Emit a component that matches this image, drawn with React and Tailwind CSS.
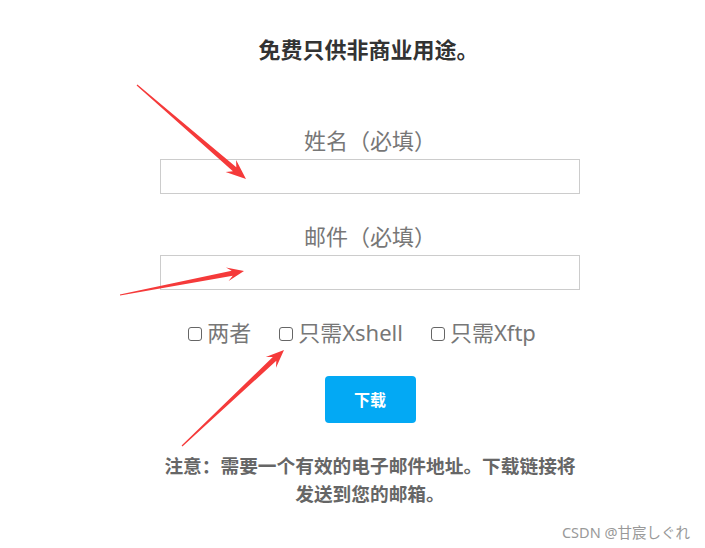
import React from "react";

const FONT = { fontFamily: '"Noto Sans", "Noto Sans CJK SC", sans-serif' };

// tapered red annotation arrow, tail -> tip
function arrowPoints([tx, ty], [px, py], back = 20, half = 8) {
  const len = Math.hypot(px - tx, py - ty);
  const ux = (px - tx) / len, uy = (py - ty) / len;
  const nx = -uy, ny = ux;
  const bx = px - back * ux, by = py - back * uy;
  const kx = px - (back - 5) * ux, ky = py - (back - 5) * uy;
  const pts = [
    [tx + 0.6 * nx, ty + 0.6 * ny],
    [kx + 2.6 * nx, ky + 2.6 * ny],
    [bx + half * nx, by + half * ny],
    [px, py],
    [bx - half * nx, by - half * ny],
    [kx - 2.6 * nx, ky - 2.6 * ny],
    [tx - 0.6 * nx, ty - 0.6 * ny],
  ];
  return pts.map(p => p.map(v => v.toFixed(1)).join(",")).join(" ");
}

const ARROWS = [
  { tail: [137, 85], tip: [246, 179], back: 20, half: 8 },
  { tail: [120, 295], tip: [244, 271], back: 17, half: 7 },
  { tail: [182, 446], tip: [284, 350], back: 18, half: 7.5 },
];

function Check({ label }) {
  return (
    <label className="flex items-center gap-[5px]">
      <span className="mt-[4px] w-[14px] h-[14px] border border-[#666] rounded-[3px] bg-white" />
      <span>{label}</span>
    </label>
  );
}

export default function App() {
  return (
    <div className="relative w-[705px] h-[548px] bg-white overflow-hidden" style={FONT}>
      <div className="ml-[160px] w-[420px] pt-[36px] flex flex-col">
        <h1 className="pr-[3px] text-center text-[22px] leading-[26px] font-bold text-[#333]">免费只供非商业用途。</h1>

        <div className="mt-[65px] text-center text-[22px] leading-[26px] text-[#777]">姓名（必填）</div>
        <input className="mt-[6px] h-[35px] w-full border border-[#ccc] bg-white outline-none px-2" />

        <div className="mt-[29px] text-center text-[22px] leading-[26px] text-[#777]">邮件（必填）</div>
        <input className="mt-[6px] h-[35px] w-full border border-[#ccc] bg-white outline-none px-2" />

        <div className="mt-[29px] pr-[16px] flex justify-center gap-[28px] text-[22px] leading-[26px] text-[#777]">
          <Check label="两者" />
          <Check label="只需Xshell" />
          <Check label="只需Xftp" />
        </div>

        <div className="mt-[31px] flex justify-center">
          <button className="w-[91px] h-[47px] rounded-[4px] bg-[#03a9f4] text-white text-[16px] font-bold">下载</button>
        </div>

        <p className="mt-[29px] text-center text-[18.7px] leading-[28px] font-bold text-[#666]">
          注意：需要一个有效的电子邮件地址。下载链接将发送到您的邮箱。
        </p>
      </div>

      <div className="absolute right-[15px] top-[522px] text-[14.5px] leading-[20px] text-[#999]">CSDN @甘宸しぐれ</div>

      <svg className="absolute inset-0 pointer-events-none" width="705" height="548" viewBox="0 0 705 548">
        {ARROWS.map((a, i) => (
          <polygon key={i} points={arrowPoints(a.tail, a.tip, a.back, a.half)} fill="#f53a3a" />
        ))}
      </svg>
    </div>
  );
}
